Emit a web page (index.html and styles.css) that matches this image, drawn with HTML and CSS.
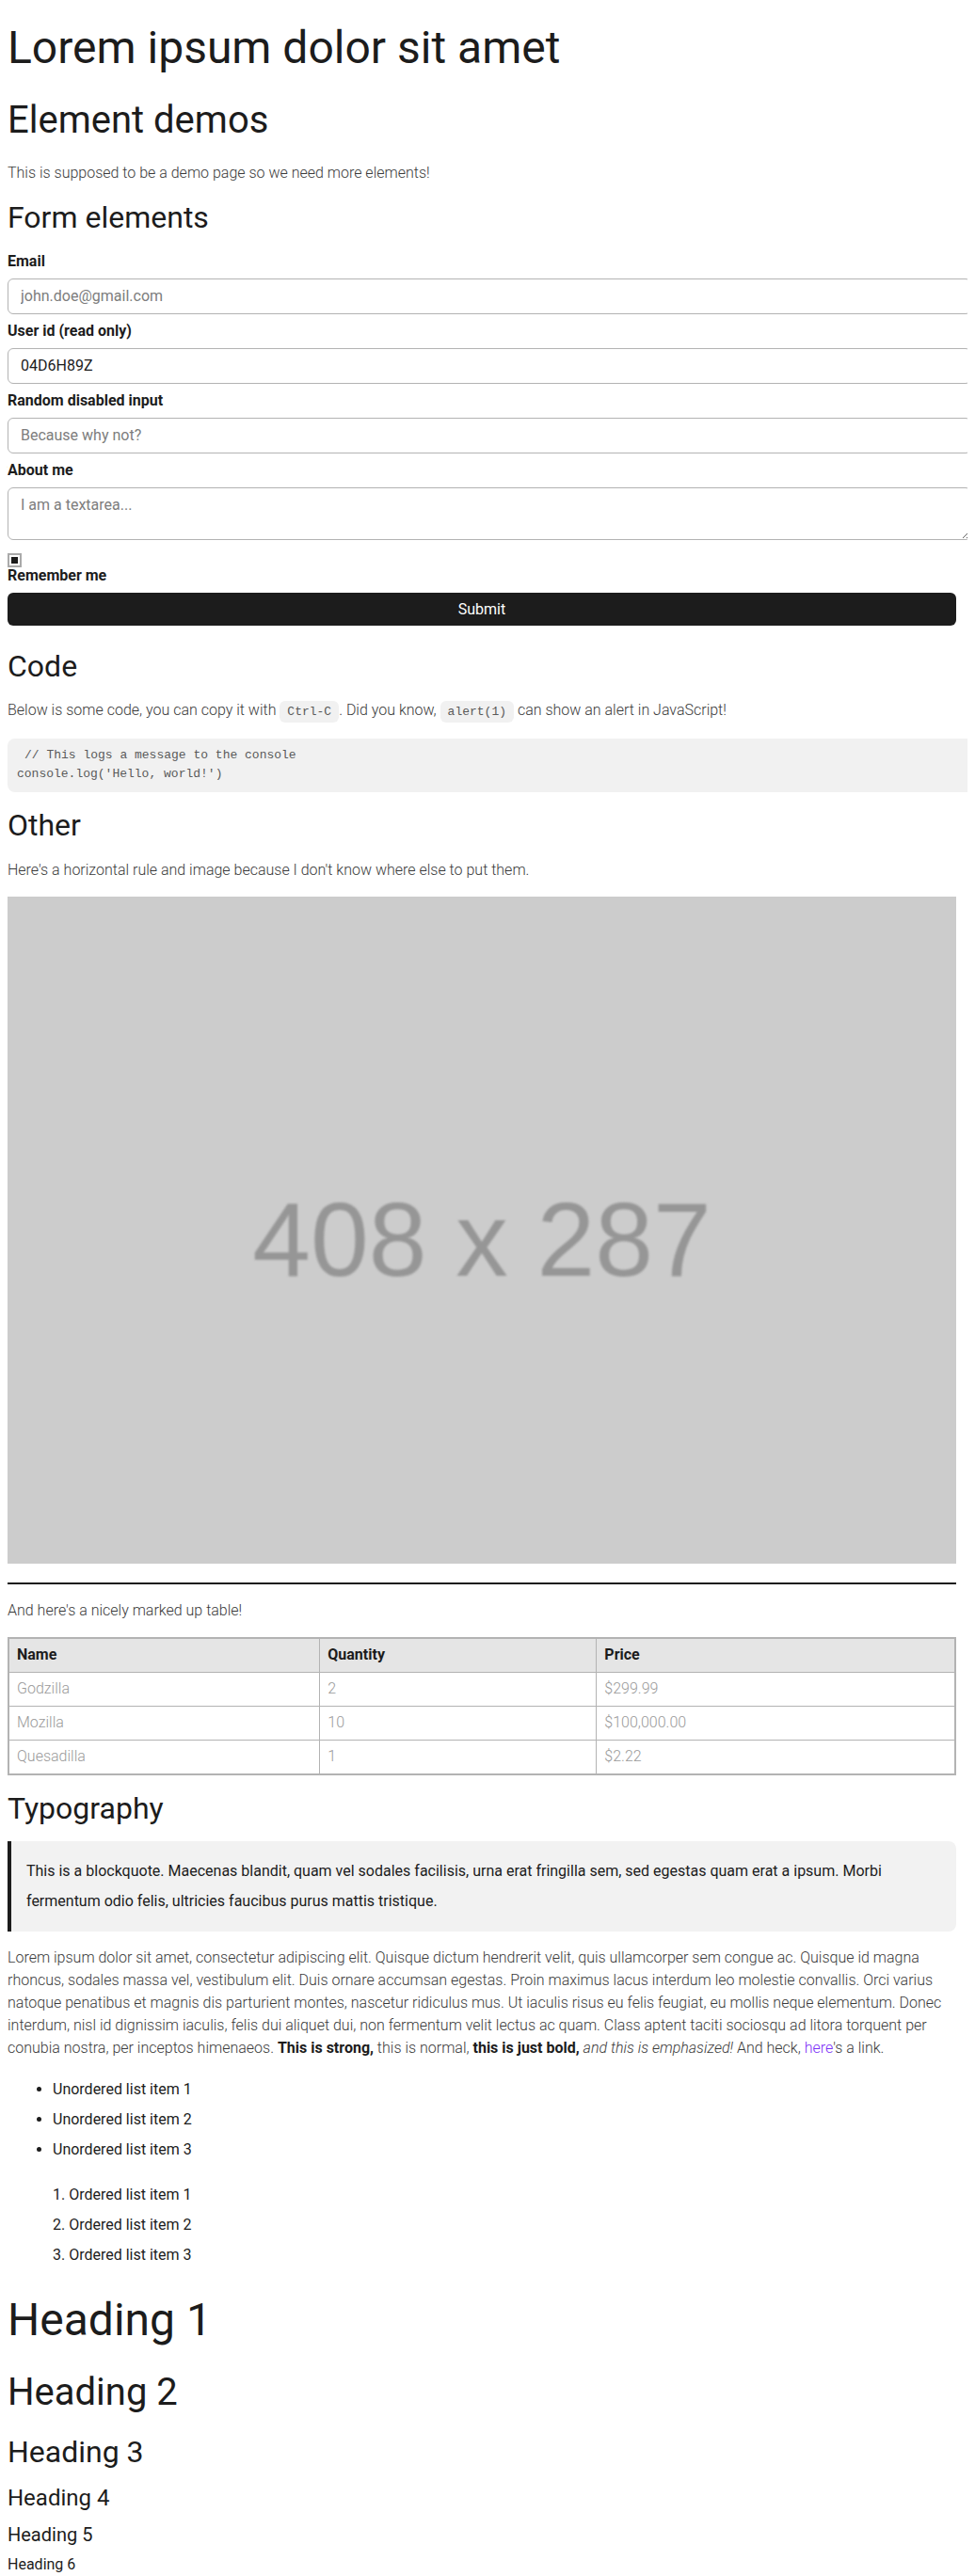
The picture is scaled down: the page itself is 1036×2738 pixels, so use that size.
FILE: index.html
```html
<!DOCTYPE html>
<html lang="en">
<head>
<meta charset="utf-8">
<title>Element demos</title>
<link rel="stylesheet" href="styles.css">
</head>
<body>
<main class="page">
  <h1 class="h1 h1-first">Lorem ipsum dolor sit amet</h1>
  <h2 class="h2">Element demos</h2>
  <p class="text">This is supposed to be a demo page so we need more elements!</p>

  <h3 class="h3">Form elements</h3>
  <form class="form">
    <label class="label">Email</label>
    <input class="field" type="email" placeholder="john.doe@gmail.com">
    <label class="label">User id (read only)</label>
    <input class="field" type="text" value="04D6H89Z" readonly>
    <label class="label">Random disabled input</label>
    <input class="field" type="text" placeholder="Because why not?" disabled>
    <label class="label">About me</label>
    <textarea class="area" placeholder="I am a textarea..."></textarea>
    <input class="check" type="checkbox" checked>
    <label class="label label-check">Remember me</label>
    <button class="submit" type="button">Submit</button>
  </form>

  <h3 class="h3">Code</h3>
  <p class="text">Below is some code, you can copy it with <code class="code">Ctrl-C</code>. Did you know, <code class="code">alert(1)</code> can show an alert in JavaScript!</p>
  <pre class="pre"><code class="code code-block">// This logs a message to the console
console.log('Hello, world!')</code></pre>

  <h3 class="h3">Other</h3>
  <p class="text">Here's a horizontal rule and image because I don't know where else to put them.</p>
  <div class="image"><span class="image-label">408 x 287</span></div>
  <hr class="rule">
  <p class="text">And here's a nicely marked up table!</p>
  <table class="table">
    <thead>
      <tr><th class="th col-name">Name</th><th class="th col-qty">Quantity</th><th class="th col-price">Price</th></tr>
    </thead>
    <tbody>
      <tr><td class="td">Godzilla</td><td class="td">2</td><td class="td">$299.99</td></tr>
      <tr><td class="td">Mozilla</td><td class="td">10</td><td class="td">$100,000.00</td></tr>
      <tr><td class="td">Quesadilla</td><td class="td">1</td><td class="td">$2.22</td></tr>
    </tbody>
  </table>

  <h3 class="h3">Typography</h3>
  <blockquote class="quote">This is a blockquote. Maecenas blandit, quam vel sodales facilisis, urna erat fringilla sem, sed egestas quam erat a ipsum. Morbi fermentum odio felis, ultricies faucibus purus mattis tristique.</blockquote>
  <p class="text">Lorem ipsum dolor sit amet, consectetur adipiscing elit. Quisque dictum hendrerit velit, quis ullamcorper sem congue ac. Quisque id magna rhoncus, sodales massa vel, vestibulum elit. Duis ornare accumsan egestas. Proin maximus lacus interdum leo molestie convallis. Orci varius natoque penatibus et magnis dis parturient montes, nascetur ridiculus mus. Ut iaculis risus eu felis feugiat, eu mollis neque elementum. Donec interdum, nisl id dignissim iaculis, felis dui aliquet dui, non fermentum velit lectus ac quam. Class aptent taciti sociosqu ad litora torquent per conubia nostra, per inceptos himenaeos. <strong class="strong">This is strong,</strong> this is normal, <b class="strong">this is just bold,</b> <em class="em">and this is emphasized!</em> And heck, <a class="link" href="#">here</a>'s a link.</p>
  <ul class="list">
    <li class="item">Unordered list item 1</li>
    <li class="item">Unordered list item 2</li>
    <li class="item">Unordered list item 3</li>
  </ul>
  <ol class="list list-ordered">
    <li class="item">Ordered list item 1</li>
    <li class="item">Ordered list item 2</li>
    <li class="item">Ordered list item 3</li>
  </ol>

  <h1 class="h1">Heading 1</h1>
  <h2 class="h2">Heading 2</h2>
  <h3 class="h3">Heading 3</h3>
  <h4 class="h4">Heading 4</h4>
  <h5 class="h5">Heading 5</h5>
  <h6 class="h6">Heading 6</h6>
</main>
</body>
</html>
```

FILE: styles.css
```css
html {
  background: #ffffff;
}

body {
  margin: 8px;
  font-family: Roboto, "Noto Sans", "Liberation Sans", sans-serif;
  font-size: 16px;
  color: #1c1c1c;
  background: #ffffff;
}

.page {
  width: 1008px;
}

.h1, .h2, .h3, .h4, .h5, .h6 {
  font-weight: 400;
  line-height: 1.2;
  margin: 0.5em 0;
  color: #1c1c1c;
}

.h1 { font-size: 48px; }
.h2 { font-size: 40px; }
.h3 { font-size: 32px; }
.h4 { font-size: 24px; }
.h5 { font-size: 20px; }
.h6 { font-size: 16px; }

.h1-first {
  margin-top: 14px;
}

.text {
  margin: 16px 0;
  font-weight: 300;
  line-height: 24px;
  color: #3a3a3a;
}

.form {
  margin: 0 0 24px;
}

.label {
  display: block;
  font-weight: 700;
  line-height: 24px;
  color: #1c1c1c;
}

.field,
.area {
  display: block;
  box-sizing: border-box;
  width: 1024px;
  margin: 6px 0;
  padding: 8px 12px 8px 13px;
  border: 1px solid #b3b3b3;
  border-radius: 6px;
  background: #ffffff;
  font-family: Roboto, "Noto Sans", sans-serif;
  font-size: 16px;
  line-height: 20px;
  color: #1c1c1c;
}

.field {
  height: 38px;
}

.area {
  height: 56px;
  resize: vertical;
}

.field::placeholder,
.area::placeholder {
  color: #7d7d7d;
}

.field:disabled {
  background: #ffffff;
}

.check {
  display: block;
  appearance: none;
  -webkit-appearance: none;
  box-sizing: border-box;
  width: 15px;
  height: 15px;
  margin: 14px 0 0;
  border: 2px solid #aaaaaa;
  background: #1c1c1c;
  box-shadow: inset 0 0 0 2px #ffffff;
}

.label-check {
  line-height: 18px;
}

.submit {
  display: block;
  width: 1008px;
  height: 35px;
  margin: 9px 0 0;
  padding: 0;
  border: none;
  border-radius: 6px;
  background: #1c1c1c;
  color: #ffffff;
  font-family: Roboto, "Noto Sans", sans-serif;
  font-size: 16px;
  line-height: 35px;
}

.code {
  font-family: "Liberation Mono", "DejaVu Sans Mono", monospace;
  font-size: 13px;
  color: #5a5a5a;
  background: #f1f1f1;
  padding: 4px 8px;
  border-radius: 6px;
}

.pre {
  box-sizing: border-box;
  width: 1028px;
  margin: 16px 0;
  padding: 8px 10px 9px;
  background: #f1f1f1;
  border-radius: 8px;
  font-family: "Liberation Mono", "DejaVu Sans Mono", monospace;
  font-size: 13px;
  line-height: 20px;
  color: #555555;
  white-space: pre;
}

.code-block {
  padding: 4px 8px;
  border-radius: 0;
}

.image {
  display: flex;
  align-items: center;
  justify-content: center;
  height: 709px;
  margin: 16px 0 0;
  background: #cccccc;
}

.image-label {
  font-family: "Liberation Sans", Arial, sans-serif;
  font-size: 111px;
  color: #969696;
  padding-top: 22px;
  filter: blur(1px);
}

.rule {
  height: 0;
  margin: 20px 0 16px;
  border: none;
  border-top: 2px solid #1c1c1c;
}

.table {
  width: 1008px;
  border-collapse: collapse;
  border: 2px solid #b3b3b3;
  margin: 16px 0;
}

.th,
.td {
  border: 1px solid #b3b3b3;
  padding: 5.5px 8px;
  line-height: 24px;
  text-align: left;
}

.th {
  background: #e5e5e5;
  font-weight: 700;
  color: #1c1c1c;
}

.td {
  font-weight: 300;
  color: #9a9a9a;
}

.col-name { width: 331px; }
.col-qty { width: 293px; }
.col-price { width: 384px; }

.quote {
  margin: 16px 0;
  padding: 16px;
  border-left: 4px solid #1c1c1c;
  border-radius: 0 8px 8px 0;
  background: #f2f2f2;
  line-height: 32px;
  color: #1c1c1c;
}

.strong {
  font-weight: 700;
  color: #1c1c1c;
}

.em {
  font-style: italic;
}

.link {
  color: #7b2ff7;
  text-decoration: none;
}

.list {
  margin: 16px 0;
  padding-left: 48px;
}

.list-ordered {
  list-style-position: inside;
}

.item {
  line-height: 32px;
  color: #1c1c1c;
}
```
